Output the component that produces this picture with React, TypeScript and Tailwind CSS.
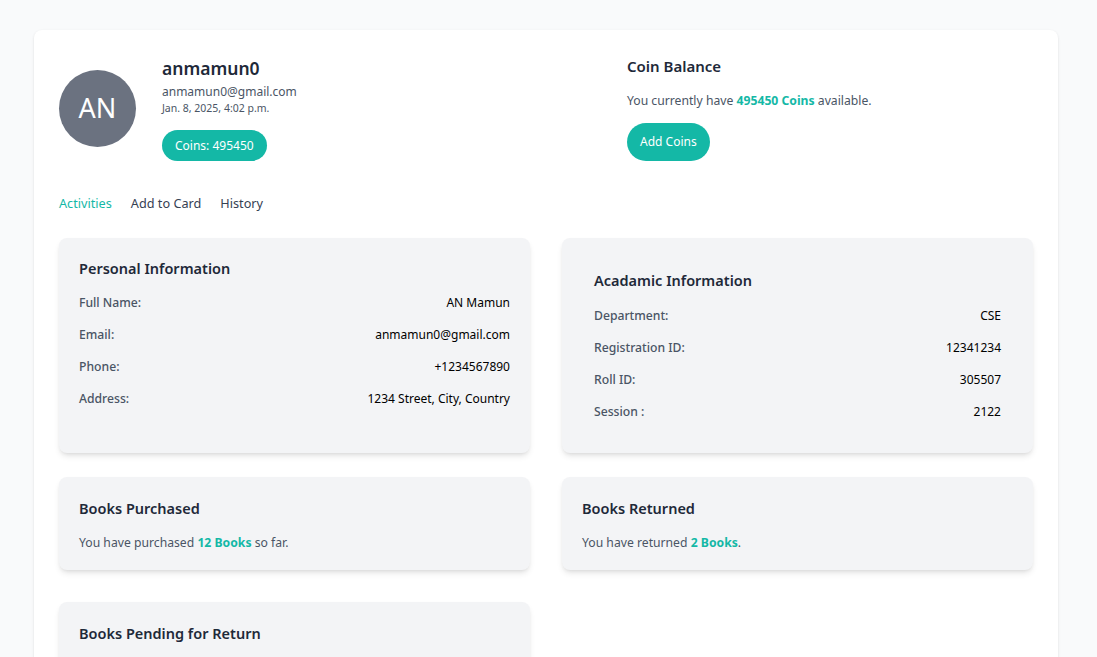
import React from "react";

const font = { fontFamily: '"Noto Sans", "Open Sans", sans-serif' };

function Row({ label, value }: { label: string; value: string }) {
  return (
    <div className="flex justify-between items-center h-8">
      <span className="text-[12.2px] font-medium text-gray-600">{label}</span>
      <span className="text-[12px] text-black">{value}</span>
    </div>
  );
}

export default function App() {
  return (
    <div className="min-h-screen bg-gray-50 pt-[30px]" style={font}>
      <div className="ml-[34px] w-[1024px] bg-white rounded-lg shadow-sm px-[25px] pt-[28px] pb-10">
        <div className="flex">
          <div className="flex w-[568px] items-start">
            <div className="w-[77px] h-[77px] mt-[12px] rounded-full bg-[#6b7280] flex items-center justify-center text-white text-[27px]">
              AN
            </div>
            <div className="ml-[26px] flex flex-col">
              <div className="text-[17.5px] font-semibold text-gray-800 leading-[26px] mt-[-3px]">anmamun0</div>
              <div className="text-[12px] text-gray-600 leading-[18px] mt-[2px]">anmamun0@gmail.com</div>
              <div className="text-[10.5px] text-gray-600 leading-[14px]">Jan. 8, 2025, 4:02 p.m.</div>
              <div className="mt-[15px] self-start rounded-full bg-[#14b8a6] text-white text-[12px] h-[31px] px-[13px] flex items-center">
                Coins: 495450
              </div>
            </div>
          </div>
          <div className="flex flex-col">
            <div className="text-[15px] font-semibold text-gray-800 leading-[22px] mt-[-3px]">Coin Balance</div>
            <div className="text-[12.2px] text-gray-600 mt-[14px] leading-[20px]">
              You currently have <span className="font-bold text-[#14b8a6]">495450 Coins</span> available.
            </div>
            <div className="mt-[12px] self-start rounded-full bg-[#14b8a6] text-white text-[12px] h-[38px] px-[13px] flex items-center">
              Add Coins
            </div>
          </div>
        </div>

        <div className="flex gap-[19px] mt-[32px] text-[12.7px] leading-[20px]">
          <span className="text-[#14b8a6]">Activities</span>
          <span className="text-gray-700">Add to Card</span>
          <span className="text-gray-700">History</span>
        </div>

        <div className="grid grid-cols-2 gap-[32px] mt-[25px]">
          <div className="bg-gray-100 rounded-lg shadow-md px-5 pt-[19px] pb-[25px]">
            <div className="text-[14.5px] font-semibold text-gray-800 leading-[22px] mb-[8px]">Personal Information</div>
            <Row label="Full Name:" value="AN Mamun" />
            <Row label="Email:" value="anmamun0@gmail.com" />
            <Row label="Phone:" value="+1234567890" />
            <Row label="Address:" value="1234 Street, City, Country" />
          </div>
          <div className="bg-gray-100 rounded-lg shadow-md px-8 pt-[31px] pb-[25px]">
            <div className="text-[14.5px] font-semibold text-gray-800 leading-[22px] mb-[9px]">Acadamic Information</div>
            <Row label="Department:" value="CSE" />
            <Row label="Registration ID:" value="12341234" />
            <Row label="Roll ID:" value="305507" />
            <Row label="Session :" value="2122" />
          </div>
        </div>

        <div className="grid grid-cols-2 gap-[32px] mt-[24px]">
          <div className="bg-gray-100 rounded-lg shadow-md px-5 pt-[20px] h-[93px]">
            <div className="text-[14.5px] font-semibold text-gray-800 leading-[22px]">Books Purchased</div>
            <div className="text-[12.2px] text-gray-600 mt-[14px] leading-[20px]">
              You have purchased <span className="font-bold text-[#14b8a6]">12 Books</span> so far.
            </div>
          </div>
          <div className="bg-gray-100 rounded-lg shadow-md px-5 pt-[20px] h-[93px]">
            <div className="text-[14.5px] font-semibold text-gray-800 leading-[22px]">Books Returned</div>
            <div className="text-[12.2px] text-gray-600 mt-[14px] leading-[20px]">
              You have returned <span className="font-bold text-[#14b8a6]">2 Books</span>.
            </div>
          </div>
        </div>

        <div className="grid grid-cols-2 gap-[32px] mt-[32px]">
          <div className="bg-gray-100 rounded-lg shadow-md px-5 pt-[20px] h-[93px]">
            <div className="text-[14.5px] font-semibold text-gray-800 leading-[22px]">Books Pending for Return</div>
            <div className="text-[12.2px] text-gray-600 mt-[14px] leading-[20px]">
              You have <span className="font-bold text-[#14b8a6]">10 Books</span> pending for return.
            </div>
          </div>
        </div>
      </div>
    </div>
  );
}
